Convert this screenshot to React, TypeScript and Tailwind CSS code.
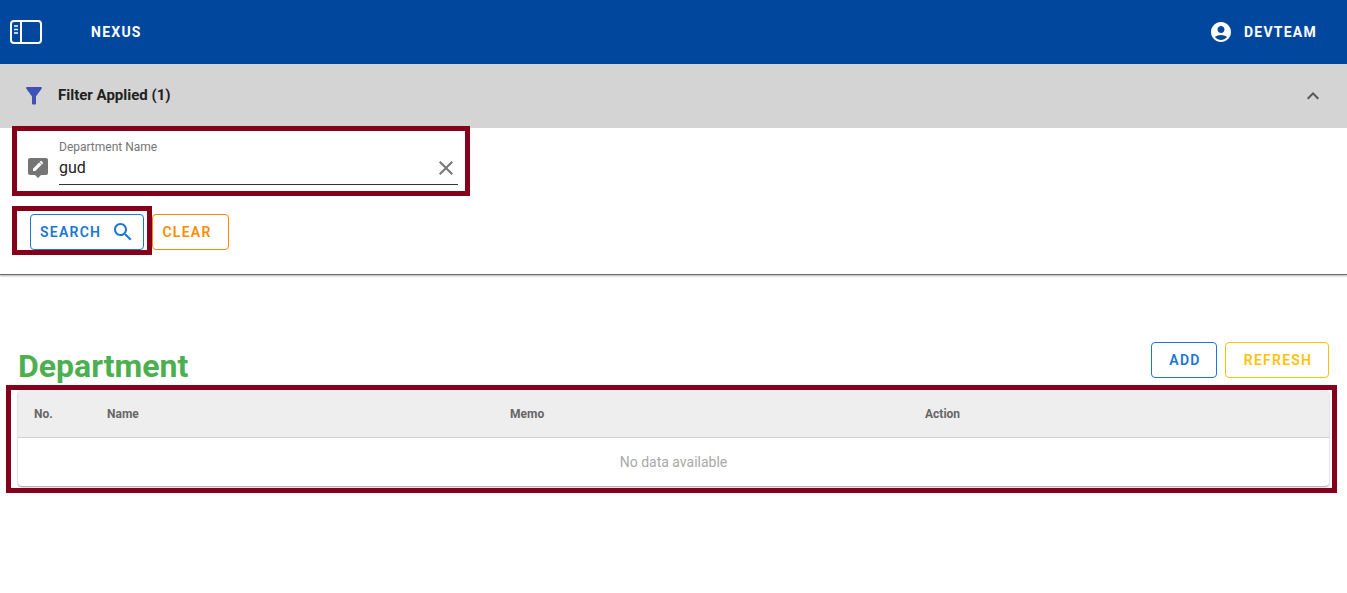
function SidebarIcon() {
  return (
    <svg width="34" height="26" viewBox="0 0 34 26" fill="none" stroke="#fff" strokeWidth="2">
      <rect x="2" y="2" width="30" height="22" rx="3" />
      <path d="M12 2v22" />
      <path d="M5 7h4M5 10.5h4M5 14h4" strokeWidth="1.5" />
    </svg>
  );
}

function FilterIcon() {
  return (
    <svg width="24" height="24" viewBox="0 0 24 24" fill="#3f51b5">
      <path d="M4.25 4.61C6.27 7.4 10 12.5 10 12.5v7c0 .55.45 1 1 1h2c.55 0 1-.45 1-1v-7s3.72-5.1 5.74-7.89c.51-.66.04-1.61-.79-1.61H5.04c-.83 0-1.3.95-.79 1.61z" />
    </svg>
  );
}

function AccountIcon() {
  return (
    <svg width="24" height="24" viewBox="0 0 24 24" fill="#fff">
      <path d="M12 2C6.48 2 2 6.48 2 12s4.48 10 10 10 10-4.48 10-10S17.52 2 12 2zm0 4c1.93 0 3.5 1.57 3.5 3.5S13.93 13 12 13s-3.5-1.57-3.5-3.5S10.07 6 12 6zm0 14c-2.03 0-4.43-.82-6.14-2.88C7.55 15.8 9.68 15 12 15s4.45.8 6.14 2.12C16.43 19.18 14.03 20 12 20z" />
    </svg>
  );
}

function ChevronUp() {
  return (
    <svg width="24" height="24" viewBox="0 0 24 24" fill="#555">
      <path d="M12 8l-6 6 1.41 1.41L12 10.83l4.59 4.58L18 14z" />
    </svg>
  );
}

function EditBubble() {
  return (
    <svg width="24" height="24" viewBox="0 0 24 24" fill="#757575">
      <path
        fillRule="evenodd"
        d="M4 2h16c1.1 0 2 .9 2 2v13c0 1.1-.9 2-2 2h-5l-3 3-3-3H4c-1.1 0-2-.9-2-2V4c0-1.1.9-2 2-2zM7 15h2.3l6.2-6.2-2.3-2.3L7 12.7V15zm9.9-7.6c.2-.2.2-.6 0-.8l-1.5-1.5c-.2-.2-.6-.2-.8 0l-1 1 2.3 2.3 1-1z"
      />
    </svg>
  );
}

function CloseIcon() {
  return (
    <svg width="24" height="24" viewBox="0 0 24 24" fill="#757575">
      <path d="M19 6.41 17.59 5 12 10.59 6.41 5 5 6.41 10.59 12 5 17.59 6.41 19 12 13.41 17.59 19 19 17.59 13.41 12z" />
    </svg>
  );
}

function SearchIcon() {
  return (
    <svg width="24" height="24" viewBox="0 0 24 24" fill="#1976d2">
      <path d="M15.5 14h-.79l-.28-.27C15.41 12.59 16 11.11 16 9.5 16 5.91 13.09 3 9.5 3S3 5.91 3 9.5 5.91 16 9.5 16c1.61 0 3.09-.59 4.23-1.57l.27.28v.79l5 4.99L20.49 19l-4.99-5zm-6 0C7.01 14 5 11.99 5 9.5S7.01 5 9.5 5 14 7.01 14 9.5 11.99 14 9.5 14z" />
    </svg>
  );
}

export default function App() {
  return (
    <div className="min-h-[593px] bg-white font-['Roboto',sans-serif]">
      {/* Top bar */}
      <header className="flex h-16 items-center justify-between bg-[#01479d] pl-[9px] pr-[30px] text-white">
        <div className="flex items-center">
          <SidebarIcon />
          <span className="ml-[48px] text-sm font-bold tracking-[1.25px]">NEXUS</span>
        </div>
        <div className="flex items-center">
          <AccountIcon />
          <span className="ml-[11px] text-sm font-bold tracking-[1.25px]">DEVTEAM</span>
        </div>
      </header>

      {/* Filter panel */}
      <section className="h-[211px] border-b border-[#6b6b6b] shadow-[0_1px_2px_rgba(0,0,0,0.3)]">
        <div className="flex h-16 items-center justify-between bg-[#d4d4d4] px-[22px]">
          <div className="flex items-center">
            <FilterIcon />
            <span className="ml-3 -translate-y-px text-[15px] font-bold text-[#212121]">Filter Applied (1)</span>
          </div>
          <ChevronUp />
        </div>

        <div className="-mt-[2px] ml-3 flex h-[70px] w-[458px] items-end border-[5px] border-[#85001a] bg-white pb-[6px] pl-[9px] pr-[7px]">
          <div className="mb-[5px]">
            <EditBubble />
          </div>
          <div className="relative ml-[9px] h-[49px] flex-1 border-b border-[#333]">
            <div className="absolute left-0 top-[4px] text-xs leading-[14px] text-[#757575]">Department Name</div>
            <div className="absolute left-0 top-[20px] text-base leading-6 text-[#212121]">gud</div>
            <div className="absolute right-0 top-[20px]">
              <CloseIcon />
            </div>
          </div>
        </div>

        <div className="ml-3 mt-[10px] flex items-start">
          <div className="h-[49px] w-[140px] border-[5px] border-[#85001a] pl-[13px] pt-[3px]">
            <button className="flex h-[36px] w-[114px] items-center rounded border border-[#1976d2] pl-[9px] text-sm font-semibold tracking-[1.25px] text-[#1976d2]">
              SEARCH
              <span className="ml-[10px]">
                <SearchIcon />
              </span>
            </button>
          </div>
          <button className="mt-2 h-[36px] w-[77px] rounded border border-[#fb8c00] pr-[7px] text-sm font-semibold tracking-[1.25px] text-[#fb8c00]">
            CLEAR
          </button>
        </div>
      </section>

      {/* Department list */}
      <div className="mt-[67px] flex items-start justify-between px-[18px]">
        <h1 className="mt-[3px] text-[32px] font-bold leading-[42px] text-[#4caf50]">Department</h1>
        <div className="flex gap-2">
          <button className="h-[36px] w-[66px] rounded border border-[#1976d2] pl-[2px] text-sm font-semibold tracking-[1.25px] text-[#1976d2]">
            ADD
          </button>
          <button className="h-[36px] w-[104px] rounded border border-[#ffc107] pl-[2px] text-sm font-semibold tracking-[1.25px] text-[#ffc107]">
            REFRESH
          </button>
        </div>
      </div>

      <div className="ml-[6px] -mt-[2px] h-[108px] w-[1331px] border-[5px] border-[#85001a] pl-[7px] pr-[3px]">
        <div className="h-[96px] overflow-hidden rounded bg-white shadow-[0_1px_2px_rgba(0,0,0,0.4)]">
          <div className="grid h-[48px] grid-cols-[89px_403px_415px_1fr] items-center border-b border-[#d0d0d0] bg-[#eeeeee] text-xs font-bold text-[#666]">
            <span className="pl-4">No.</span>
            <span>Name</span>
            <span>Memo</span>
            <span>Action</span>
          </div>
          <div className="flex h-[48px] items-center justify-center text-sm text-[#a8a8a8]">No data available</div>
        </div>
      </div>
    </div>
  );
}
